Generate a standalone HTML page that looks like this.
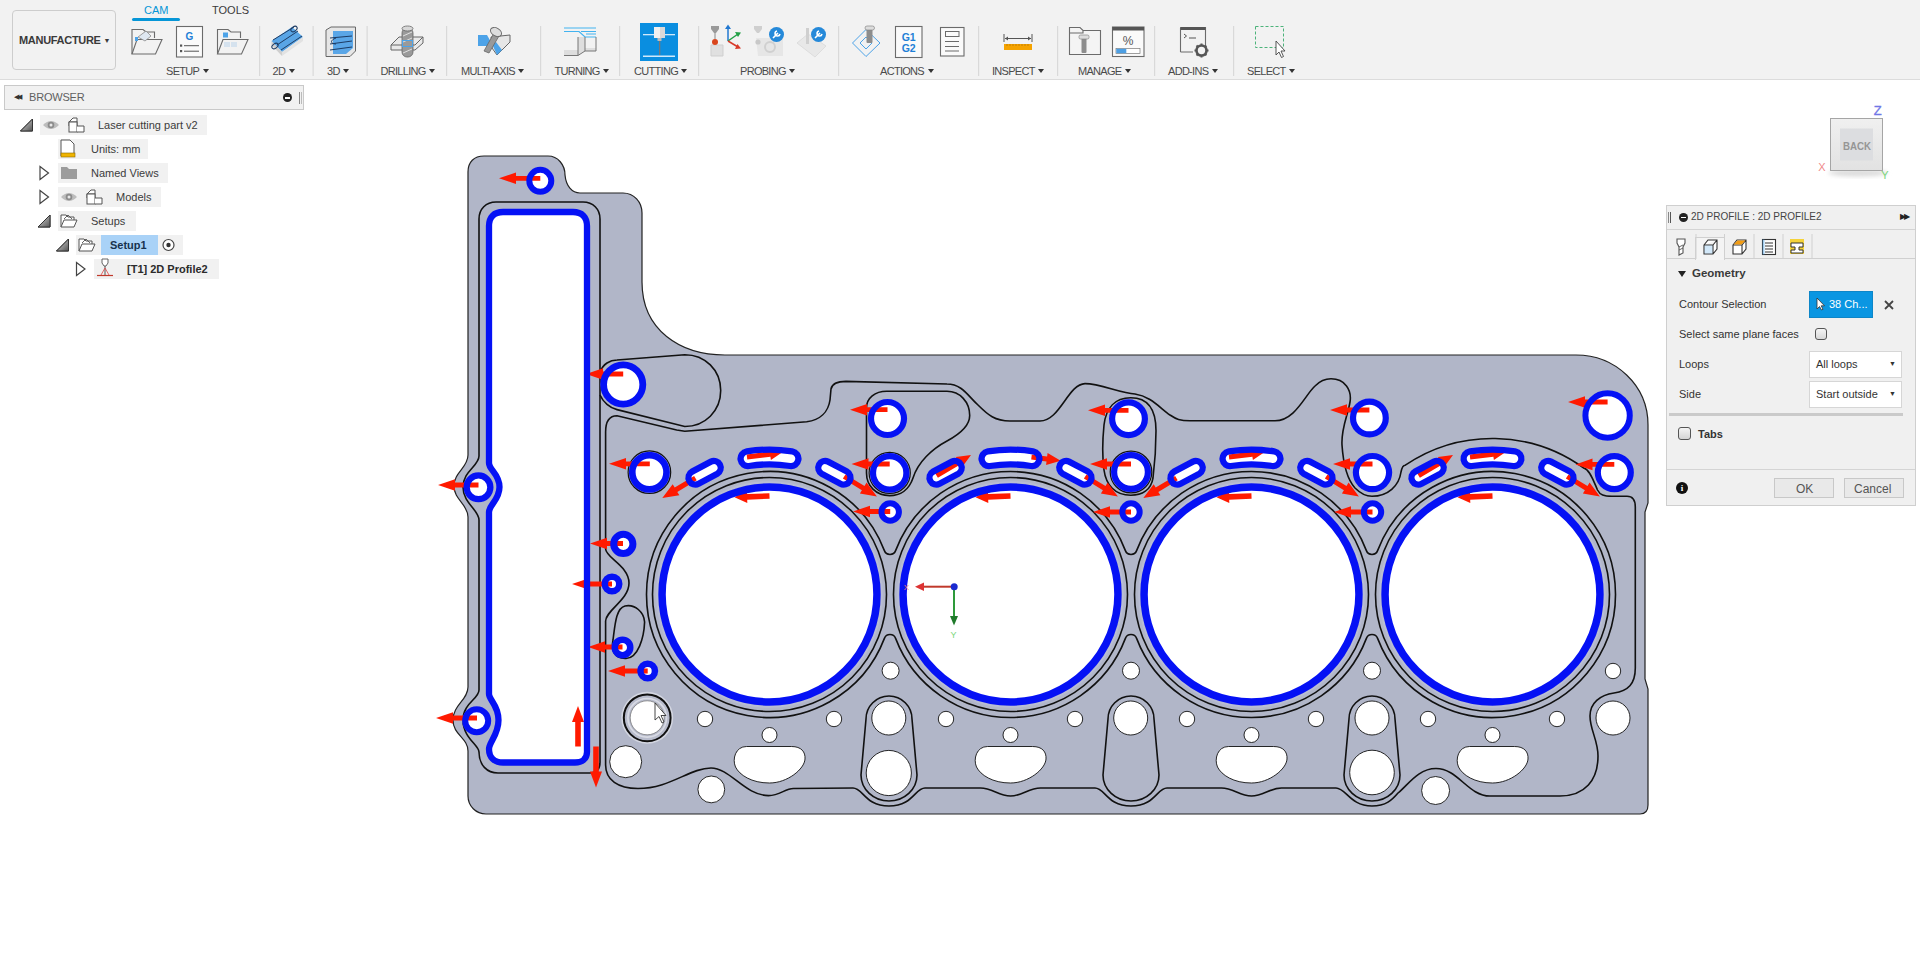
<!DOCTYPE html>
<html><head><meta charset="utf-8">
<style>
*{margin:0;padding:0;box-sizing:border-box}
html,body{width:1920px;height:953px;overflow:hidden;background:#fff;font-family:"Liberation Sans",sans-serif;position:relative}
.abs{position:absolute}
#tb{position:absolute;left:0;top:0;width:1920px;height:80px;background:#f2f2f2;border-bottom:1px solid #dcdcdc}
.lbl{position:absolute;top:65px;font-size:11px;color:#4a4a4a;white-space:nowrap;letter-spacing:-0.7px}
.lbl b{display:inline-block;width:0;height:0;border-left:3px solid transparent;border-right:3px solid transparent;border-top:4px solid #333;vertical-align:2px;margin-left:3.5px}
.sep{position:absolute;top:26px;width:1px;height:50px;background:#d6d6d6}
.ico{position:absolute}
#browser{position:absolute;left:4px;top:85px;width:300px;height:25px;background:#f1f1f1;border:1px solid #c9c9c9}
.row{position:absolute;height:20px;background:#f1f1f1}
.t{position:absolute;font-size:11px;color:#3c3c3c;white-space:nowrap}
#dlg{position:absolute;left:1666px;top:205px;width:250px;height:301px;background:#f0f0f0;border:1px solid #cfcfcf}
.dt{position:absolute;font-size:11px;color:#333;white-space:nowrap}
</style></head><body>
<div id="tb">
  <!-- MANUFACTURE -->
  <div class="abs" style="left:12px;top:10px;width:104px;height:60px;border:1px solid #cdcdcd;border-radius:4px;background:#f2f2f2"></div>
  <div class="abs" style="left:19px;top:34px;font-size:11px;font-weight:bold;color:#3a3a3a;letter-spacing:-0.3px">MANUFACTURE <span style="font-size:7px;vertical-align:1px">&#9660;</span></div>
  <div class="abs" style="left:144px;top:4px;font-size:11px;color:#0696d7">CAM</div>
  <div class="abs" style="left:132px;top:18px;width:48px;height:3px;background:#0696d7;border-radius:2px"></div>
  <div class="abs" style="left:212px;top:4px;font-size:11px;color:#3a3a3a">TOOLS</div>
  <svg class="abs" style="left:0;top:0" width="1920" height="80" viewBox="0 0 1920 80">
<rect x="259" y="26" width="1.2" height="50" fill="#d9d9d9"/>
<rect x="312.5" y="26" width="1.2" height="50" fill="#d9d9d9"/>
<rect x="366.5" y="26" width="1.2" height="50" fill="#d9d9d9"/>
<rect x="446" y="26" width="1.2" height="50" fill="#d9d9d9"/>
<rect x="540" y="26" width="1.2" height="50" fill="#d9d9d9"/>
<rect x="619" y="26" width="1.2" height="50" fill="#d9d9d9"/>
<rect x="698" y="26" width="1.2" height="50" fill="#d9d9d9"/>
<rect x="838" y="26" width="1.2" height="50" fill="#d9d9d9"/>
<rect x="978" y="26" width="1.2" height="50" fill="#d9d9d9"/>
<rect x="1057" y="26" width="1.2" height="50" fill="#d9d9d9"/>
<rect x="1154" y="26" width="1.2" height="50" fill="#d9d9d9"/>
<rect x="1233" y="26" width="1.2" height="50" fill="#d9d9d9"/>
<g fill="none" stroke="#6b6b6b" stroke-width="1.1"><path d="M132,54 L132,29.5 L143,29.5 L146,32 L154.5,32 L154.5,38"/><path d="M132,54 L137,39.5 L162,39.5 L155.5,54 Z" fill="#f2f2f2"/></g>
<path d="M138,37 L146,31 L151,36 L145,41 Z" fill="#dfe8f2" stroke="#8a8a8a" stroke-width="0.8"/>
<rect x="135" y="37" width="3" height="4" fill="#4da3e8"/>
<rect x="176.5" y="26.5" width="26" height="30.5" fill="#fafafa" stroke="#6b6b6b" stroke-width="1.1"/>
<text x="189.5" y="40" font-size="10" font-weight="bold" fill="#1f7fd6" text-anchor="middle" font-family="Liberation Sans">G</text>
<rect x="180" y="44.5" width="2.2" height="2.2" fill="#555"/><rect x="184" y="45.2" width="15" height="1" fill="#555"/>
<rect x="180" y="50" width="2.2" height="2.2" fill="#555"/><rect x="184" y="50.7" width="15" height="1" fill="#555"/>
<g fill="none" stroke="#6b6b6b" stroke-width="1.1"><path d="M217.5,54 L217.5,29.5 L228,29.5 L231,32 L240.5,32 L240.5,38"/><path d="M217.5,54 L223,39.5 L248,39.5 L241.5,54 Z" fill="#f2f2f2"/></g>
<rect x="223" y="32.5" width="5" height="5" fill="#4da3e8"/>
<rect x="224" y="42" width="6" height="5" fill="#d5e2ee"/><rect x="231" y="42" width="6" height="5" fill="#d5e2ee"/>
<path d="M271.5,41 L292,27 L303,37 L282,52 Z" fill="#59a5e6"/>
<path d="M271.5,41 L282,52 L282,56 L271.5,45 Z" fill="#cfcfcf"/>
<path d="M282,52 L303,37 L303,41 L282,56 Z" fill="#e2e2e2"/>
<g fill="none" stroke="#1d3b63" stroke-width="1"><path d="M273,40 L294,27"/><path d="M277,45 L298,31"/><path d="M281,50 L302,36"/><ellipse cx="294" cy="29" rx="3.5" ry="2.2" transform="rotate(-35 294 29)"/><ellipse cx="275" cy="46" rx="3.5" ry="2.2" transform="rotate(-35 275 46)"/></g>
<path d="M326,30 L331,27 L355.5,27 L355.5,51 L350,56.5 L326,56.5 Z" fill="#e6e6e6" stroke="#666" stroke-width="1"/>
<path d="M333,31 L353,31 L353,48 L346,54 L333,54 Z" fill="#5aa6e7"/>
<g fill="none" stroke="#1d3b63" stroke-width="1"><path d="M330,38 L352,36 M330,44 L352,41 M330,50 L352,47"/><path d="M336,38 C330,40 330,44 336,44"/></g>
<path d="M391,45 L399,37 L423,37 L423,43 L415,50 L391,50 Z" fill="#e9e9e9" stroke="#666" stroke-width="1"/>
<path d="M391,45 L415,45 L423,37" fill="none" stroke="#666" stroke-width="1"/>
<rect x="402" y="28" width="11" height="29" rx="5" fill="#9a9a9a" stroke="#666" stroke-width="0.8"/>
<ellipse cx="407.5" cy="28.5" rx="5.5" ry="2.5" fill="#d8d8d8" stroke="#666" stroke-width="0.8"/>
<g stroke="#e0e0e0" stroke-width="1"><path d="M403,36 L412,32 M403,42 L412,38 M403,53 L412,49"/></g>
<rect x="402.5" y="40.5" width="10" height="6" fill="none" stroke="#4da3e8" stroke-width="1"/>
<path d="M478,35 L487,35 L492,44 L491,46 L478,46 Z" fill="#4da3e8"/>
<path d="M491,37 L510,35 L510,42 L497,55 L492,48 Z" fill="#e6e6e6" stroke="#666" stroke-width="1"/>
<path d="M492,44 L497,55 L502,50 L496,42 Z" fill="#4da3e8"/>
<path d="M484,51 L494,33 L499,36 L489,53 Z" fill="#999" stroke="#666" stroke-width="0.8"/>
<ellipse cx="496" cy="32" rx="6" ry="4" transform="rotate(30 496 32)" fill="#ddd" stroke="#666" stroke-width="0.9"/>
<g fill="none" stroke="#43b3f0" stroke-width="1.2"><path d="M564,28 L596,28 M564,31.5 L579,31.5 L585,37 L596,37 M581,31.5 L596,31.5 M586,34 L596,34"/></g>
<path d="M564,50 L578,50 L578,37 L585,37 L585,48 L596,48 L596,51 L585,51 L578,55.5 L564,55.5 Z" fill="#dedede"/>
<path d="M578,55.5 L578,37 M585,37 L585,51 M596,37 L596,51 L585,51 L578,55.5 L564,55.5" fill="none" stroke="#777" stroke-width="1"/>
<rect x="640" y="23" width="38" height="38" fill="#0a8ee0"/>
<rect x="643" y="34" width="32" height="1.3" fill="#cfe9fb"/><rect x="643" y="55.5" width="32" height="1.5" fill="#cfe9fb"/>
<rect x="654" y="27" width="11" height="11" fill="#f0f0f0"/><rect x="660" y="27" width="5" height="11" fill="#d9d9d9"/>
<rect x="657.5" y="38" width="4" height="3" fill="#bbb"/><rect x="659" y="41" width="1.3" height="14" fill="#777"/>
<path d="M711,45 L723,45 L723,56 L711,56 Z" fill="#e0e0e0" stroke="#cfcfcf"/>
<path d="M711,26 L719,26 L719,29 L716,33 L714,33 L711,29 Z" fill="#9a9a9a"/><rect x="714.5" y="33" width="1" height="6" fill="#888"/>
<circle cx="715" cy="42" r="3" fill="#d9451c"/>
<path d="M728,41 L728,28" stroke="#2278d0" stroke-width="1.5"/><path d="M725,29 L728,24.5 L731,29 Z" fill="#2278d0"/>
<path d="M728,41 L738,34" stroke="#23a046" stroke-width="1.5"/><path d="M735,32 L741,32.5 L738,37 Z" fill="#23a046"/>
<path d="M728,41 L738,47" stroke="#d83a2a" stroke-width="1.5"/><path d="M735,49 L741,48.5 L737.5,44 Z" fill="#d83a2a"/>
<path d="M756,38 L783,38 L783,56 L758,56 Z" fill="#e6e6e6"/><circle cx="770" cy="47" r="5" fill="none" stroke="#d0d0d0" stroke-width="2"/>
<path d="M754,26 L762,26 L762,29 L759,33 L757,33 L754,29 Z" fill="#cfcfcf"/><circle cx="758" cy="42" r="2.6" fill="#c8c8c8"/>
<circle cx="776.5" cy="34.5" r="7.5" fill="#2589d9"/><path d="M773,38 L778,33 M777,31 A2.5,2.5 0 1 0 780,34" stroke="#fff" stroke-width="1.6" fill="none"/>
<path d="M797,43 L808,34 L826,46 L815,57 Z" fill="#e8e8e8" stroke="#ddd"/><rect x="806" y="28" width="3" height="16" fill="#cfcfcf"/>
<circle cx="818.5" cy="34.5" r="7.5" fill="#2589d9"/><path d="M815,38 L820,33 M819,31 A2.5,2.5 0 1 0 822,34" stroke="#fff" stroke-width="1.6" fill="none"/>
<path d="M866,29.5 L880,43 L866,56.5 L852.5,43 Z" fill="none" stroke="#4da3e8" stroke-width="1"/>
<path d="M866,37 L872,43 L866,49 L860,43 Z" fill="none" stroke="#4da3e8" stroke-width="1"/>
<rect x="866.5" y="29" width="6" height="14" rx="1" fill="#8d8d8d"/><rect x="865" y="26" width="9.5" height="4" rx="2" fill="#ddd" stroke="#888" stroke-width="0.7"/>
<rect x="895.5" y="26.5" width="26.5" height="31" fill="#fafafa" stroke="#6b6b6b" stroke-width="1.1"/>
<text x="908.7" y="40.5" font-size="10.5" font-weight="bold" fill="#1f7fd6" text-anchor="middle" font-family="Liberation Sans">G1</text>
<text x="908.7" y="52" font-size="10.5" font-weight="bold" fill="#1f7fd6" text-anchor="middle" font-family="Liberation Sans">G2</text>
<rect x="940.5" y="27.5" width="23.5" height="28.5" fill="#fafafa" stroke="#6b6b6b" stroke-width="1.1"/>
<rect x="945.5" y="31.5" width="13.5" height="5" fill="none" stroke="#6b6b6b" stroke-width="1"/>
<path d="M945,41.5 L959,41.5 M945,46.5 L959,46.5 M945,51 L959,51" stroke="#6b6b6b" stroke-width="1"/>
<rect x="1004" y="44" width="28" height="6" fill="#f5a300"/>
<g stroke="#a66a00" stroke-width="0.6"><path d="M1007,44 v2 M1010,44 v2 M1013,44 v2 M1016,44 v2 M1019,44 v2 M1022,44 v2 M1025,44 v2 M1028,44 v2"/></g>
<path d="M1004,34 v8 M1032,34 v8 M1005,38.5 L1031,38.5" stroke="#555" stroke-width="1"/>
<path d="M1005,38.5 L1008,36.5 L1008,40.5 Z M1031,38.5 L1028,36.5 L1028,40.5 Z" fill="#555"/>
<path d="M1069.5,54.5 L1069.5,27.5 L1080,27.5 L1083,30.5 L1100.5,30.5 L1100.5,54.5 Z M1069.5,33 L1083,33 L1083,30.5" fill="#f4f4f4" stroke="#6b6b6b" stroke-width="1.1"/>
<rect x="1081.5" y="37" width="5" height="16" rx="1" fill="#8d8d8d"/><rect x="1079" y="35" width="10" height="4" rx="1.5" fill="#ddd" stroke="#888" stroke-width="0.7"/>
<rect x="1112.5" y="27" width="31.5" height="29.5" fill="#fafafa" stroke="#6b6b6b" stroke-width="1.1"/>
<rect x="1112.5" y="27" width="31.5" height="3.5" fill="#555"/>
<text x="1128" y="45" font-size="12" fill="#555" text-anchor="middle" font-family="Liberation Sans">%</text>
<rect x="1116" y="48.5" width="24" height="5" fill="#fff" stroke="#777" stroke-width="0.7"/><rect x="1116.3" y="48.8" width="10" height="4.4" fill="#4d9fe3"/>
<path d="M1180.5,27.5 L1205.5,27.5 L1205.5,47 M1193,52 L1180.5,52 Z" fill="none" stroke="#6b6b6b" stroke-width="1.1"/>
<path d="M1180.5,27.5 L1180.5,52" stroke="#6b6b6b" stroke-width="1.1"/><rect x="1180.5" y="27" width="25" height="3" fill="#555"/>
<path d="M1184,34 L1186.5,36 L1184,38" fill="none" stroke="#555" stroke-width="1"/><path d="M1189,38 L1196,38" stroke="#555" stroke-width="1"/>
<circle cx="1201.5" cy="50.5" r="5" fill="none" stroke="#555" stroke-width="2.6"/>
<g stroke="#555" stroke-width="2"><path d="M1201.5,43.5 v2 M1201.5,55.5 v2 M1194.5,50.5 h2 M1206.5,50.5 h2 M1196.5,45.5 l1.4,1.4 M1205,54 l1.4,1.4 M1196.5,55.5 l1.4,-1.4 M1205,47 l1.4,-1.4"/></g>
<rect x="1255.5" y="26.5" width="28" height="21" fill="none" stroke="#4cb37a" stroke-width="1" stroke-dasharray="3,2"/>
<path d="M1276,41 L1276,55 L1279,52 L1281.5,57.5 L1283.5,56.5 L1281,51 L1285,51 Z" fill="#fff" stroke="#444" stroke-width="0.9"/>
</svg>
<div class="lbl" style="left:166px">SETUP<b></b></div>
<div class="lbl" style="left:272.5px">2D<b></b></div>
<div class="lbl" style="left:327px">3D<b></b></div>
<div class="lbl" style="left:380.5px">DRILLING<b></b></div>
<div class="lbl" style="left:461px">MULTI-AXIS<b></b></div>
<div class="lbl" style="left:554.5px">TURNING<b></b></div>
<div class="lbl" style="left:634px">CUTTING<b></b></div>
<div class="lbl" style="left:740px">PROBING<b></b></div>
<div class="lbl" style="left:880px">ACTIONS<b></b></div>
<div class="lbl" style="left:992px">INSPECT<b></b></div>
<div class="lbl" style="left:1078px">MANAGE<b></b></div>
<div class="lbl" style="left:1168px">ADD-INS<b></b></div>
<div class="lbl" style="left:1247px">SELECT<b></b></div>
</div>
<div id="browser">
  <div class="abs" style="left:9px;top:7px;font-size:7px;color:#333;letter-spacing:-2px">&#9664;&#9664;</div>
  <div class="abs" style="left:24px;top:5px;font-size:11px;color:#606060;letter-spacing:-0.2px">BROWSER</div>
  <div class="abs" style="left:278px;top:7px;width:9px;height:9px;border-radius:50%;background:#222"></div>
  <div class="abs" style="left:280px;top:11px;width:5px;height:1.5px;background:#fff"></div>
  <div class="abs" style="left:294px;top:6px;width:1px;height:12px;background:#888"></div>
  <div class="abs" style="left:296px;top:6px;width:1px;height:12px;background:#bbb"></div>
</div>
<div class="row" style="left:40px;top:115px;width:167px"></div>
<div class="row" style="left:58px;top:139px;width:90px"></div>
<div class="row" style="left:58px;top:163px;width:110px"></div>
<div class="row" style="left:58px;top:187px;width:103px"></div>
<div class="row" style="left:58px;top:211px;width:78px"></div>
<div class="row" style="left:76px;top:235px;width:107px"></div>
<div class="row" style="left:94px;top:259px;width:125px"></div>
<div class="abs" style="left:101px;top:235px;width:57px;height:20px;background:#a9d2f7"></div>
<svg class="abs" style="left:0;top:110px" width="310" height="180" viewBox="0 110 310 180">
<defs><linearGradient id="tg" x1="0" y1="0" x2="1" y2="1"><stop offset="0" stop-color="#ddd"/><stop offset="1" stop-color="#555"/></linearGradient></defs>
<path d="M32.5,119 L32.5,131 L20.5,131 Z" fill="#888" stroke="#444" stroke-width="1"/>
<path d="M32.5,119 L20.5,131 L32.5,131 Z" fill="url(#tg)" stroke="#333" stroke-width="1"/>
<path d="M40,166.5 L48.5,173 L40,179.5 Z" fill="#fff" stroke="#444" stroke-width="1.2"/>
<path d="M40,190.5 L48.5,197 L40,203.5 Z" fill="#fff" stroke="#444" stroke-width="1.2"/>
<path d="M50,215 L50,227 L38,227 Z" fill="#888" stroke="#444" stroke-width="1"/>
<path d="M50,215 L38,227 L50,227 Z" fill="url(#tg)" stroke="#333" stroke-width="1"/>
<path d="M68.5,239 L68.5,251 L56.5,251 Z" fill="#888" stroke="#444" stroke-width="1"/>
<path d="M68.5,239 L56.5,251 L68.5,251 Z" fill="url(#tg)" stroke="#333" stroke-width="1"/>
<path d="M76.5,262.5 L85.0,269 L76.5,275.5 Z" fill="#fff" stroke="#444" stroke-width="1.2"/>
<path d="M43,125 Q51,117 59,125 Q51,133 43,125 Z" fill="#bdbdbd"/>
<circle cx="51" cy="125" r="3.3" fill="#8c8c8c"/><circle cx="51" cy="125" r="1.5" fill="#e8e8e8"/>
<path d="M61,197 Q69,189 77,197 Q69,205 61,197 Z" fill="#bdbdbd"/>
<circle cx="69" cy="197" r="3.3" fill="#8c8c8c"/><circle cx="69" cy="197" r="1.5" fill="#e8e8e8"/>
<g fill="#fff" stroke="#555" stroke-width="1"><path d="M69,122 L73,118 L77,118 L77,126 L69,126 Z"/><path d="M69,122 L77,122"/><rect x="69" y="122" width="8" height="10"/><path d="M77,126 L84,126 L84,132 L77,132"/></g>
<g fill="#fff" stroke="#555" stroke-width="1"><path d="M87,194 L91,190 L95,190 L95,198 L87,198 Z"/><path d="M87,194 L95,194"/><rect x="87" y="194" width="8" height="10"/><path d="M95,198 L102,198 L102,204 L95,204"/></g>
<path d="M61,140 L70,140 L74,144 L74,156 L61,156 Z" fill="#fff" stroke="#555" stroke-width="1"/>
<rect x="61" y="153" width="14" height="4" fill="#f0b400" stroke="#8a6a00" stroke-width="0.6"/>
<path d="M61,167 L67,167 L69,169 L77,169 L77,179 L61,179 Z" fill="#9c9c9c"/>
<g fill="#fff" stroke="#555" stroke-width="1"><path d="M61,227 L61,215 L66,215 L68,217 L74,217 L74,220"/><path d="M61,227 L64,220 L77,220 L74,227 Z"/></g>
<path d="M64,219 L68,215 L72,219" fill="none" stroke="#555" stroke-width="0.9"/>
<g fill="#fff" stroke="#555" stroke-width="1"><path d="M79,251 L79,239 L84,239 L86,241 L92,241 L92,244"/><path d="M79,251 L82,244 L95,244 L92,251 Z"/></g>
<path d="M82,243 L86,239 L90,243" fill="none" stroke="#555" stroke-width="0.9"/>
<circle cx="168.5" cy="245" r="5.5" fill="#fff" stroke="#444" stroke-width="1.2"/><circle cx="168.5" cy="245" r="2.2" fill="#333"/>
<path d="M102,259 L108,259 L108,263 L106,266 L104,266 L102,263 Z" fill="#fff" stroke="#555" stroke-width="0.9"/>
<path d="M105,266 L105,275" stroke="#555" stroke-width="1"/><path d="M97,275.5 L113,275.5" stroke="#c0392b" stroke-width="1.2"/>
<path d="M105,268 L101,275 M105,268 L109,275" stroke="#d44" stroke-width="0.8"/>
</svg>
<div class="t" style="left:98px;top:119px;">Laser cutting part v2</div>
<div class="t" style="left:91px;top:143px;">Units: mm</div>
<div class="t" style="left:91px;top:167px;">Named Views</div>
<div class="t" style="left:116px;top:191px;">Models</div>
<div class="t" style="left:91px;top:215px;">Setups</div>
<div class="t" style="left:110px;top:239px;font-weight:bold;color:#17324f">Setup1</div>
<div class="t" style="left:127px;top:263px;font-weight:bold;color:#2b2b2b">[T1] 2D Profile2</div>
<svg class="abs" style="left:0;top:0" width="1920" height="953" viewBox="0 0 1920 953">
<path d="M468,172 C468,162 474,156 484,156 L548,156 C558,156 565,165 565,175 C566,186 572,193 580,193 L623,193 C634,193 642,202 642,213 L642,282 C642,330 680,355 725,355 L1576,355 C1615,355 1648,385 1648,425 L1648,503 L1645,512 L1645,679 L1648,689 L1648,805 Q1648,814 1640,814 L486,814 C476,814 468,806 468,796 L468,751 C468,738 453,735 453,720 C453,705 468,700 468,687 L468,517 C468,504 454,500 454,486 C454,472 468,468 468,455 Z" fill="#b1b6c8" stroke="#222" stroke-width="1.2"/>
<path d="M496,202 L583,202 C593,202 600,209 600,219 L600,762 Q600,773 590,773 L498,773 C487,773 479,765 479,752 C479,745 463,738 463,720 C463,703 479,699 479,690 L479,520 C479,510 463,503 463,487 C463,471 479,466 479,456 L479,219 C479,209 486,202 496,202 Z" fill="none" stroke="#111" stroke-width="1.6"/>
<path d="M600,372 C603,364 610,360 617,360 L684.8,354.7 C705,354.7 720.7,370 720.7,390.6 C720.7,411 705,426.5 684.8,426.5 L617,409.6 C610,408 603,402 600,395" fill="none" stroke="#111" stroke-width="1.6"/>
<path d="M605.6,432 C605.6,420 610,415.7 617,415.7 L676.7,430 L684.8,431.2 L806.7,421.8 C820,420 828.3,412 830,400 L831,389 C832,384 838,381.4 846,381.4 L947,384 C962,384 968,396 978,405 C988,415 995,421 1010,421 L1040,421 C1060,421 1068,384 1085,383.6 C1100,383.5 1120,393 1135,394 C1150,396 1160,408 1170,415 C1176,419 1180,420.8 1190,420.8 L1275,420.8 C1295,420.8 1305,395 1315,386 C1322,379 1327,378.8 1331,378.8 C1345,378.8 1352,390 1350,402 C1348,415 1341,428 1342,445 C1343,460 1346,478 1355,488 C1362,495 1368,496.3 1372,496.3 C1388,496.3 1399,486 1401,472 C1402,467 1403,465 1405.3,465.2 A156,156 0 0 1 1584.2,468.3 C1590,470 1594,482 1597.5,490 C1600,495 1604,496.3 1612,496.3 L1627,496.3 C1632,496.3 1635.3,500 1635.3,507 L1635.3,668 C1635.3,684 1628,691 1614,693 C1600,695 1590,703 1590,716 C1590,730 1598,740 1598,756 C1598,780 1585,796 1560,796 L1490,796 C1468,796 1458,768.5 1436,768.5 C1418,768.5 1408,785 1398,793 C1392,800 1386,806 1372,806 C1350,806 1346,788 1336,788 L1281.5,788 C1269.5,788 1263.5,796 1251.5,796 C1239.5,796 1233.5,788 1221.5,788 L1170,788 L1167.0,788 C1157.0,788 1155.0,806 1131.0,806 C1107.0,806 1105.0,788 1095.0,788 L1040.5,788 C1028.5,788 1022.5,796 1010.5,796 C998.5,796 992.5,788 980.5,788 L930,788 L925.0,788 C915.0,788 913.0,806 889.0,806 C865.0,806 863.0,788 853.0,788 L793.4,788.5 C785,788.5 780,795.6 768.5,795.6 C745,795.6 730,768 711,768 C690,768 670,788.5 638,788.5 C618,788.5 605.6,780 605.6,765 L605.6,621 C606,610 629,600 629,583 C629,566 606,558 605.6,549 L605.6,432 Z" fill="none" stroke="#111" stroke-width="1.6"/>
<path d="M866.5,473 L866.5,408 C866.5,398 875,391.3 886.7,391.3 L947,391.3 C960,391.3 969.7,402 969.7,415.5 C969.7,425 960,434 947,441 C932,449 918,462 913,478 C909,490 900,495.6 889.7,495.6 C876,495.6 866.5,486 866.5,473 Z" fill="none" stroke="#111" stroke-width="1.6"/>
<path d="M1130.8,397.8 C1148,397.8 1156,410 1156,430.8 C1156,450 1154,470 1153,478 C1151,490 1142,495.3 1130.8,495.3 C1115,495.3 1106,485 1104,470 C1102,455 1102.5,440 1104,425 C1106,408 1115,397.8 1130.8,397.8 Z" fill="none" stroke="#111" stroke-width="1.6"/>
<path d="M625,606 C635,604 644,612 644.6,622 C644,638 638,658 626,658.5 C614,659 611,650 613,640 C615,625 616,608 625,606 Z" fill="none" stroke="#111" stroke-width="1.6"/>
<path d="M866.0,719 A23,23 0 0 1 912.0,719 L917.0,775 A28,26 0 0 1 861.0,775 Z" fill="none" stroke="#111" stroke-width="1.6"/>
<path d="M1108.0,719 A23,23 0 0 1 1154.0,719 L1159.0,775 A28,26 0 0 1 1103.0,775 Z" fill="none" stroke="#111" stroke-width="1.6"/>
<path d="M1349.0,719 A23,23 0 0 1 1395.0,719 L1400.0,775 A28,26 0 0 1 1344.0,775 Z" fill="none" stroke="#111" stroke-width="1.6"/>
<circle cx="769.5" cy="594.5" r="117" fill="none" stroke="#111" stroke-width="1.6"/>
<circle cx="1010.5" cy="594.5" r="117" fill="none" stroke="#111" stroke-width="1.6"/>
<circle cx="1251.5" cy="594.5" r="117" fill="none" stroke="#111" stroke-width="1.6"/>
<circle cx="1492.5" cy="594.5" r="117" fill="none" stroke="#111" stroke-width="1.6"/>
<path d="M646.5,594.5 A123,123 0 0 1 884.4,550.6 A6,6 0 0 0 895.6,550.6 A123,123 0 0 1 1125.4,550.6 A6,6 0 0 0 1136.6,550.6 A123,123 0 0 1 1366.4,550.6 A6,6 0 0 0 1377.6,550.6 A123,123 0 0 1 1615.5,594.5 A123,123 0 0 1 1377.6,638.4 A6,6 0 0 0 1366.4,638.4 A123,123 0 0 1 1136.6,638.4 A6,6 0 0 0 1125.4,638.4 A123,123 0 0 1 895.6,638.4 A6,6 0 0 0 884.4,638.4 A123,123 0 0 1 646.5,594.5 Z" fill="none" stroke="#111" stroke-width="1.6"/>
<circle cx="769.5" cy="594.5" r="112.3" fill="none" stroke="#b9bdd4" stroke-width="2"/>
<circle cx="1010.5" cy="594.5" r="112.3" fill="none" stroke="#b9bdd4" stroke-width="2"/>
<circle cx="1251.5" cy="594.5" r="112.3" fill="none" stroke="#b9bdd4" stroke-width="2"/>
<circle cx="1492.5" cy="594.5" r="112.3" fill="none" stroke="#b9bdd4" stroke-width="2"/>
<circle cx="705.0" cy="719" r="7.7" fill="#fff" stroke="#111" stroke-width="0.9"/>
<circle cx="769.5" cy="735" r="7.5" fill="#fff" stroke="#111" stroke-width="0.9"/>
<circle cx="834.0" cy="719" r="7.7" fill="#fff" stroke="#111" stroke-width="0.9"/>
<path d="M746.5,746.5 L791.5,746.5 C801.5,746.5 805.5,752 805.0,759 C804.5,769 787.5,783 769.5,783 C751.5,783 739.5,775 735.5,767 C732.0,759 735.5,746.5 746.5,746.5 Z" fill="#fff" stroke="#111" stroke-width="0.9"/>
<circle cx="946.0" cy="719" r="7.7" fill="#fff" stroke="#111" stroke-width="0.9"/>
<circle cx="1010.5" cy="735" r="7.5" fill="#fff" stroke="#111" stroke-width="0.9"/>
<circle cx="1075.0" cy="719" r="7.7" fill="#fff" stroke="#111" stroke-width="0.9"/>
<path d="M987.5,746.5 L1032.5,746.5 C1042.5,746.5 1046.5,752 1046.0,759 C1045.5,769 1028.5,783 1010.5,783 C992.5,783 980.5,775 976.5,767 C973.0,759 976.5,746.5 987.5,746.5 Z" fill="#fff" stroke="#111" stroke-width="0.9"/>
<circle cx="1187.0" cy="719" r="7.7" fill="#fff" stroke="#111" stroke-width="0.9"/>
<circle cx="1251.5" cy="735" r="7.5" fill="#fff" stroke="#111" stroke-width="0.9"/>
<circle cx="1316.0" cy="719" r="7.7" fill="#fff" stroke="#111" stroke-width="0.9"/>
<path d="M1228.5,746.5 L1273.5,746.5 C1283.5,746.5 1287.5,752 1287.0,759 C1286.5,769 1269.5,783 1251.5,783 C1233.5,783 1221.5,775 1217.5,767 C1214.0,759 1217.5,746.5 1228.5,746.5 Z" fill="#fff" stroke="#111" stroke-width="0.9"/>
<circle cx="1428.0" cy="719" r="7.7" fill="#fff" stroke="#111" stroke-width="0.9"/>
<circle cx="1492.5" cy="735" r="7.5" fill="#fff" stroke="#111" stroke-width="0.9"/>
<circle cx="1557.0" cy="719" r="7.7" fill="#fff" stroke="#111" stroke-width="0.9"/>
<path d="M1469.5,746.5 L1514.5,746.5 C1524.5,746.5 1528.5,752 1528.0,759 C1527.5,769 1510.5,783 1492.5,783 C1474.5,783 1462.5,775 1458.5,767 C1455.0,759 1458.5,746.5 1469.5,746.5 Z" fill="#fff" stroke="#111" stroke-width="0.9"/>
<circle cx="890.6" cy="670.7" r="8.5" fill="#fff" stroke="#111" stroke-width="0.9"/>
<circle cx="1131" cy="670.7" r="8.5" fill="#fff" stroke="#111" stroke-width="0.9"/>
<circle cx="1372" cy="670.7" r="8.5" fill="#fff" stroke="#111" stroke-width="0.9"/>
<circle cx="888.8" cy="718" r="17" fill="#fff" stroke="#111" stroke-width="0.9"/>
<circle cx="888.8" cy="773" r="22.6" fill="#fff" stroke="#111" stroke-width="0.9"/>
<circle cx="1130.7" cy="718" r="17" fill="#fff" stroke="#111" stroke-width="0.9"/>
<circle cx="1372" cy="718" r="17" fill="#fff" stroke="#111" stroke-width="0.9"/>
<circle cx="1372" cy="772.5" r="22.3" fill="#fff" stroke="#111" stroke-width="0.9"/>
<circle cx="711.3" cy="789.4" r="13.4" fill="#fff" stroke="#111" stroke-width="0.9"/>
<circle cx="1435.6" cy="790.5" r="14" fill="#fff" stroke="#111" stroke-width="0.9"/>
<circle cx="1613" cy="671" r="7.7" fill="#fff" stroke="#111" stroke-width="0.9"/>
<circle cx="1613" cy="718" r="17" fill="#fff" stroke="#111" stroke-width="0.9"/>
<circle cx="625.7" cy="761.7" r="16" fill="#fff" stroke="#111" stroke-width="0.9"/>
<circle cx="647.2" cy="717.8" r="26" fill="#d3d6e1"/>
<circle cx="647.2" cy="717.8" r="23.4" fill="#b8bccc" stroke="#111" stroke-width="2"/>
<circle cx="647.2" cy="717.8" r="19.3" fill="none" stroke="#d9dbe4" stroke-width="1.6"/>
<circle cx="647.2" cy="717.8" r="17" fill="#fff" stroke="#555" stroke-width="0.6"/>
<circle cx="649.4" cy="472.2" r="21.3" fill="none" stroke="#111" stroke-width="1.2"/>
<circle cx="889.7" cy="472.9" r="20.6" fill="none" stroke="#111" stroke-width="1.2"/>
<circle cx="1131" cy="472" r="20.8" fill="none" stroke="#111" stroke-width="1.2"/>
<circle cx="769.5" cy="594.5" r="110.70" fill="#fff"/>
<circle cx="1010.5" cy="594.5" r="110.70" fill="#fff"/>
<circle cx="1251.5" cy="594.5" r="110.70" fill="#fff"/>
<circle cx="1492.5" cy="594.5" r="110.70" fill="#fff"/>
<path d="M503,212 L573,212 C582,212 587,217 587,226 L587,752 C587,759 582,762.5 575,762.5 L503,762.5 C494,762.5 489,757 489,749 C489,742 498.5,735 498.5,720 C498.5,705 489,700 489,694 L489,512 C489,505 499.5,500 499.5,487 C499.5,474 489,470 489,463 L489,226 C489,217 494,212 503,212 Z" fill="#fff" stroke="#fff" stroke-width="5"/>
<circle cx="540.3" cy="180.8" r="13.50" fill="#fff"/>
<circle cx="478.5" cy="487.3" r="14.50" fill="#fff"/>
<circle cx="476.7" cy="720.7" r="14.00" fill="#fff"/>
<circle cx="623.2" cy="384.5" r="22.50" fill="#fff"/>
<circle cx="649.4" cy="472.2" r="20.00" fill="#fff"/>
<circle cx="887.5" cy="418.5" r="19.10" fill="#fff"/>
<circle cx="889.7" cy="472.9" r="19.30" fill="#fff"/>
<circle cx="890.2" cy="512" r="11.25" fill="#fff"/>
<circle cx="1128.5" cy="418.7" r="19.00" fill="#fff"/>
<circle cx="1131" cy="472" r="19.50" fill="#fff"/>
<circle cx="1131" cy="512" r="11.20" fill="#fff"/>
<circle cx="1369.4" cy="418" r="19.00" fill="#fff"/>
<circle cx="1372.5" cy="472.6" r="19.20" fill="#fff"/>
<circle cx="1372.5" cy="512" r="11.20" fill="#fff"/>
<circle cx="1607.6" cy="415.5" r="24.70" fill="#fff"/>
<circle cx="1614.3" cy="472.6" r="19.10" fill="#fff"/>
<circle cx="623.3" cy="543.9" r="12.60" fill="#fff"/>
<circle cx="612" cy="584" r="10.00" fill="#fff"/>
<circle cx="622.5" cy="647.4" r="10.50" fill="#fff"/>
<circle cx="647.7" cy="671" r="10.00" fill="#fff"/>
<path d="M699.8,486.0 L718.5,476.1 A9.50,9.50 0 0 0 709.6,459.3 L690.9,469.2 A9.50,9.50 0 0 0 699.8,486.0 Z" fill="#fff"/>
<path d="M820.5,476.1 L839.2,486.0 A9.50,9.50 0 0 0 848.1,469.2 L829.4,459.3 A9.50,9.50 0 0 0 820.5,476.1 Z" fill="#fff"/>
<path d="M746.4,448.8 A147.50,147.50 0 0 1 792.6,448.8 A10.00,10.00 0 0 1 789.4,468.6 A127.50,127.50 0 0 0 749.6,468.6 A10.00,10.00 0 0 1 746.4,448.8 Z" fill="#fff"/>
<path d="M940.8,486.0 L959.5,476.1 A9.50,9.50 0 0 0 950.6,459.3 L931.9,469.2 A9.50,9.50 0 0 0 940.8,486.0 Z" fill="#fff"/>
<path d="M1061.5,476.1 L1080.2,486.0 A9.50,9.50 0 0 0 1089.1,469.2 L1070.4,459.3 A9.50,9.50 0 0 0 1061.5,476.1 Z" fill="#fff"/>
<path d="M987.4,448.8 A147.50,147.50 0 0 1 1033.6,448.8 A10.00,10.00 0 0 1 1030.4,468.6 A127.50,127.50 0 0 0 990.6,468.6 A10.00,10.00 0 0 1 987.4,448.8 Z" fill="#fff"/>
<path d="M1181.8,486.0 L1200.5,476.1 A9.50,9.50 0 0 0 1191.6,459.3 L1172.9,469.2 A9.50,9.50 0 0 0 1181.8,486.0 Z" fill="#fff"/>
<path d="M1302.5,476.1 L1321.2,486.0 A9.50,9.50 0 0 0 1330.1,469.2 L1311.4,459.3 A9.50,9.50 0 0 0 1302.5,476.1 Z" fill="#fff"/>
<path d="M1228.4,448.8 A147.50,147.50 0 0 1 1274.6,448.8 A10.00,10.00 0 0 1 1271.4,468.6 A127.50,127.50 0 0 0 1231.6,468.6 A10.00,10.00 0 0 1 1228.4,448.8 Z" fill="#fff"/>
<path d="M1422.8,486.0 L1441.5,476.1 A9.50,9.50 0 0 0 1432.6,459.3 L1413.9,469.2 A9.50,9.50 0 0 0 1422.8,486.0 Z" fill="#fff"/>
<path d="M1543.5,476.1 L1562.2,486.0 A9.50,9.50 0 0 0 1571.1,469.2 L1552.4,459.3 A9.50,9.50 0 0 0 1543.5,476.1 Z" fill="#fff"/>
<path d="M1469.4,448.8 A147.50,147.50 0 0 1 1515.6,448.8 A10.00,10.00 0 0 1 1512.4,468.6 A127.50,127.50 0 0 0 1472.6,468.6 A10.00,10.00 0 0 1 1469.4,448.8 Z" fill="#fff"/>
<polygon fill="#ff1a00" points="540.3,175.9 516.0,175.9 516.0,172.5 499.0,178.3 516.0,184.1 516.0,180.7 540.3,180.7"/>
<polygon fill="#ff1a00" points="478.5,482.6 455.0,482.6 455.0,479.2 438.0,485.0 455.0,490.8 455.0,487.4 478.5,487.4"/>
<polygon fill="#ff1a00" points="477.0,715.6 453.0,715.6 453.0,712.2 436.0,718.0 453.0,723.8 453.0,720.4 477.0,720.4"/>
<polygon fill="#ff1a00" points="580.8,746.5 580.8,722.0 584.0,722.0 578.0,706.0 572.0,722.0 575.2,722.0 575.2,746.5"/>
<polygon fill="#ff1a00" points="593.2,746.5 593.2,771.5 590.0,771.5 596.0,787.5 602.0,771.5 598.8,771.5 598.8,746.5"/>
<polygon fill="#ff1a00" points="623.2,371.6 603.0,371.6 603.0,368.2 586.0,374.0 603.0,379.8 603.0,376.4 623.2,376.4"/>
<polygon fill="#ff1a00" points="649.8,461.4 626.0,461.4 626.0,458.0 609.0,463.8 626.0,469.6 626.0,466.2 649.8,466.2"/>
<polygon fill="#ff1a00" points="887.5,407.3 867.0,407.3 867.0,403.9 850.0,409.7 867.0,415.5 867.0,412.1 887.5,412.1"/>
<polygon fill="#ff1a00" points="889.7,461.6 868.5,461.6 868.5,458.2 851.5,464.0 868.5,469.8 868.5,466.4 889.7,466.4"/>
<polygon fill="#ff1a00" points="890.2,509.1 870.0,509.1 870.0,505.7 853.0,511.5 870.0,517.3 870.0,513.9 890.2,513.9"/>
<polygon fill="#ff1a00" points="1128.5,407.9 1105.0,407.9 1105.0,404.5 1088.0,410.3 1105.0,416.1 1105.0,412.7 1128.5,412.7"/>
<polygon fill="#ff1a00" points="1131.0,461.6 1107.0,461.6 1107.0,458.2 1090.0,464.0 1107.0,469.8 1107.0,466.4 1131.0,466.4"/>
<polygon fill="#ff1a00" points="1131.0,509.6 1110.0,509.6 1110.0,506.2 1093.0,512.0 1110.0,517.8 1110.0,514.4 1131.0,514.4"/>
<polygon fill="#ff1a00" points="1369.4,407.6 1347.0,407.6 1347.0,404.2 1330.0,410.0 1347.0,415.8 1347.0,412.4 1369.4,412.4"/>
<polygon fill="#ff1a00" points="1372.5,461.6 1350.0,461.6 1350.0,458.2 1333.0,464.0 1350.0,469.8 1350.0,466.4 1372.5,466.4"/>
<polygon fill="#ff1a00" points="1372.5,509.6 1351.0,509.6 1351.0,506.2 1334.0,512.0 1351.0,517.8 1351.0,514.4 1372.5,514.4"/>
<polygon fill="#ff1a00" points="1607.6,399.6 1585.0,399.6 1585.0,396.2 1568.0,402.0 1585.0,407.8 1585.0,404.4 1607.6,404.4"/>
<polygon fill="#ff1a00" points="1614.3,462.0 1592.5,462.0 1592.5,458.6 1575.5,464.4 1592.5,470.2 1592.5,466.8 1614.3,466.8"/>
<polygon fill="#ff1a00" points="623.0,541.1 607.0,541.1 607.0,537.7 590.0,543.5 607.0,549.3 607.0,545.9 623.0,545.9"/>
<polygon fill="#ff1a00" points="612.0,581.6 589.0,581.6 589.0,578.2 572.0,584.0 589.0,589.8 589.0,586.4 612.0,586.4"/>
<polygon fill="#ff1a00" points="622.5,644.6 605.0,644.6 605.0,641.2 588.0,647.0 605.0,652.8 605.0,649.4 622.5,649.4"/>
<polygon fill="#ff1a00" points="647.7,668.6 625.0,668.6 625.0,665.2 608.0,671.0 625.0,676.8 625.0,673.4 647.7,673.4"/>
<polygon fill="#ff1a00" points="769.4,493.2 747.0,494.0 746.9,490.5 734.5,497.3 747.3,503.1 747.2,499.7 769.6,498.8"/>
<polygon fill="#ff1a00" points="1010.4,493.2 988.0,494.0 987.9,490.5 975.5,497.3 988.3,503.1 988.2,499.7 1010.6,498.8"/>
<polygon fill="#ff1a00" points="1251.4,493.2 1229.0,494.0 1228.9,490.5 1216.5,497.3 1229.3,503.1 1229.2,499.7 1251.6,498.8"/>
<polygon fill="#ff1a00" points="1492.4,493.2 1470.0,494.0 1469.9,490.5 1457.5,497.3 1470.3,503.1 1470.2,499.7 1492.6,498.8"/>
<polygon fill="#ff1a00" points="747.3,459.6 770.4,456.7 770.9,460.0 782.0,452.5 769.3,448.1 769.8,451.4 746.7,454.4"/>
<polygon fill="#ff1a00" points="1229.3,459.6 1252.4,456.7 1252.9,460.0 1264.0,452.5 1251.3,448.1 1251.8,451.4 1228.7,454.4"/>
<polygon fill="#ff1a00" points="1470.3,459.6 1493.4,456.7 1493.9,460.0 1505.0,452.5 1492.3,448.1 1492.8,451.4 1469.7,454.4"/>
<polygon fill="#ff1a00" points="694.1,476.0 674.7,487.6 672.7,484.2 662.3,498.0 679.4,495.3 677.3,491.9 696.7,480.2"/>
<polygon fill="#ff1a00" points="842.9,478.6 861.9,490.2 859.9,493.6 876.9,496.4 866.6,482.5 864.5,485.9 845.5,474.4"/>
<polygon fill="#ff1a00" points="937.9,477.8 960.3,464.4 962.0,467.3 971.0,455.0 955.9,457.0 957.6,459.9 935.1,473.2"/>
<polygon fill="#ff1a00" points="1031.2,459.5 1046.5,461.4 1046.1,464.9 1060.7,460.7 1047.6,453.0 1047.1,456.5 1031.8,454.5"/>
<polygon fill="#ff1a00" points="1083.9,478.6 1102.9,490.2 1100.9,493.6 1117.9,496.4 1107.6,482.5 1105.5,485.9 1086.5,474.4"/>
<polygon fill="#ff1a00" points="1175.1,476.0 1155.7,487.6 1153.7,484.2 1143.3,498.0 1160.4,495.3 1158.3,491.9 1177.7,480.2"/>
<polygon fill="#ff1a00" points="1324.9,478.6 1343.9,490.2 1341.9,493.6 1358.9,496.4 1348.6,482.5 1346.5,485.9 1327.5,474.4"/>
<polygon fill="#ff1a00" points="1419.9,477.8 1442.3,464.4 1444.0,467.3 1453.0,455.0 1437.9,457.0 1439.6,459.9 1417.1,473.2"/>
<polygon fill="#ff1a00" points="1565.9,478.6 1584.9,490.2 1582.9,493.6 1599.9,496.4 1589.6,482.5 1587.5,485.9 1568.5,474.4"/>
<circle cx="769.5" cy="594.5" r="107.45" fill="none" stroke="#0511f5" stroke-width="7.5"/>
<circle cx="1010.5" cy="594.5" r="107.45" fill="none" stroke="#0511f5" stroke-width="7.5"/>
<circle cx="1251.5" cy="594.5" r="107.45" fill="none" stroke="#0511f5" stroke-width="7.5"/>
<circle cx="1492.5" cy="594.5" r="107.45" fill="none" stroke="#0511f5" stroke-width="7.5"/>
<path d="M503,212 L573,212 C582,212 587,217 587,226 L587,752 C587,759 582,762.5 575,762.5 L503,762.5 C494,762.5 489,757 489,749 C489,742 498.5,735 498.5,720 C498.5,705 489,700 489,694 L489,512 C489,505 499.5,500 499.5,487 C499.5,474 489,470 489,463 L489,226 C489,217 494,212 503,212 Z" fill="none" stroke="#0511f5" stroke-width="6.3"/>
<circle cx="540.3" cy="180.8" r="11.00" fill="none" stroke="#0511f5" stroke-width="6"/>
<circle cx="478.5" cy="487.3" r="11.85" fill="none" stroke="#0511f5" stroke-width="6.3"/>
<circle cx="476.7" cy="720.7" r="11.50" fill="none" stroke="#0511f5" stroke-width="6"/>
<circle cx="623.2" cy="384.5" r="19.60" fill="none" stroke="#0511f5" stroke-width="6.8"/>
<circle cx="649.4" cy="472.2" r="17.15" fill="none" stroke="#0511f5" stroke-width="6.7"/>
<circle cx="887.5" cy="418.5" r="16.50" fill="none" stroke="#0511f5" stroke-width="6.2"/>
<circle cx="889.7" cy="472.9" r="16.70" fill="none" stroke="#0511f5" stroke-width="6.2"/>
<circle cx="890.2" cy="512" r="8.75" fill="none" stroke="#0511f5" stroke-width="6"/>
<circle cx="1128.5" cy="418.7" r="16.40" fill="none" stroke="#0511f5" stroke-width="6.2"/>
<circle cx="1131" cy="472" r="16.90" fill="none" stroke="#0511f5" stroke-width="6.2"/>
<circle cx="1131" cy="512" r="8.70" fill="none" stroke="#0511f5" stroke-width="6"/>
<circle cx="1369.4" cy="418" r="16.40" fill="none" stroke="#0511f5" stroke-width="6.2"/>
<circle cx="1372.5" cy="472.6" r="16.60" fill="none" stroke="#0511f5" stroke-width="6.2"/>
<circle cx="1372.5" cy="512" r="8.70" fill="none" stroke="#0511f5" stroke-width="6"/>
<circle cx="1607.6" cy="415.5" r="22.20" fill="none" stroke="#0511f5" stroke-width="6"/>
<circle cx="1614.3" cy="472.6" r="16.50" fill="none" stroke="#0511f5" stroke-width="6.2"/>
<circle cx="623.3" cy="543.9" r="9.60" fill="none" stroke="#0511f5" stroke-width="7"/>
<circle cx="612" cy="584" r="7.25" fill="none" stroke="#0511f5" stroke-width="6.5"/>
<circle cx="622.5" cy="647.4" r="7.75" fill="none" stroke="#0511f5" stroke-width="6.5"/>
<circle cx="647.7" cy="671" r="7.25" fill="none" stroke="#0511f5" stroke-width="6.5"/>
<path d="M698.6,483.7 L717.3,473.7 A6.85,6.85 0 0 0 710.9,461.6 L692.1,471.6 A6.85,6.85 0 0 0 698.6,483.7 Z" fill="none" stroke="#0511f5" stroke-width="6.3"/>
<path d="M821.7,473.7 L840.4,483.7 A6.85,6.85 0 0 0 846.9,471.6 L828.1,461.6 A6.85,6.85 0 0 0 821.7,473.7 Z" fill="none" stroke="#0511f5" stroke-width="6.3"/>
<path d="M746.8,451.4 A144.85,144.85 0 0 1 792.2,451.4 A7.35,7.35 0 0 1 789.9,466.0 A130.15,130.15 0 0 0 749.1,466.0 A7.35,7.35 0 0 1 746.8,451.4 Z" fill="none" stroke="#0511f5" stroke-width="6.3"/>
<path d="M939.6,483.7 L958.3,473.7 A6.85,6.85 0 0 0 951.9,461.6 L933.1,471.6 A6.85,6.85 0 0 0 939.6,483.7 Z" fill="none" stroke="#0511f5" stroke-width="6.3"/>
<path d="M1062.7,473.7 L1081.4,483.7 A6.85,6.85 0 0 0 1087.9,471.6 L1069.1,461.6 A6.85,6.85 0 0 0 1062.7,473.7 Z" fill="none" stroke="#0511f5" stroke-width="6.3"/>
<path d="M987.8,451.4 A144.85,144.85 0 0 1 1033.2,451.4 A7.35,7.35 0 0 1 1030.9,466.0 A130.15,130.15 0 0 0 990.1,466.0 A7.35,7.35 0 0 1 987.8,451.4 Z" fill="none" stroke="#0511f5" stroke-width="6.3"/>
<path d="M1180.6,483.7 L1199.3,473.7 A6.85,6.85 0 0 0 1192.9,461.6 L1174.1,471.6 A6.85,6.85 0 0 0 1180.6,483.7 Z" fill="none" stroke="#0511f5" stroke-width="6.3"/>
<path d="M1303.7,473.7 L1322.4,483.7 A6.85,6.85 0 0 0 1328.9,471.6 L1310.1,461.6 A6.85,6.85 0 0 0 1303.7,473.7 Z" fill="none" stroke="#0511f5" stroke-width="6.3"/>
<path d="M1228.8,451.4 A144.85,144.85 0 0 1 1274.2,451.4 A7.35,7.35 0 0 1 1271.9,466.0 A130.15,130.15 0 0 0 1231.1,466.0 A7.35,7.35 0 0 1 1228.8,451.4 Z" fill="none" stroke="#0511f5" stroke-width="6.3"/>
<path d="M1421.6,483.7 L1440.3,473.7 A6.85,6.85 0 0 0 1433.9,461.6 L1415.1,471.6 A6.85,6.85 0 0 0 1421.6,483.7 Z" fill="none" stroke="#0511f5" stroke-width="6.3"/>
<path d="M1544.7,473.7 L1563.4,483.7 A6.85,6.85 0 0 0 1569.9,471.6 L1551.1,461.6 A6.85,6.85 0 0 0 1544.7,473.7 Z" fill="none" stroke="#0511f5" stroke-width="6.3"/>
<path d="M1469.8,451.4 A144.85,144.85 0 0 1 1515.2,451.4 A7.35,7.35 0 0 1 1512.9,466.0 A130.15,130.15 0 0 0 1472.1,466.0 A7.35,7.35 0 0 1 1469.8,451.4 Z" fill="none" stroke="#0511f5" stroke-width="6.3"/>
<line x1="954" y1="586.7" x2="922" y2="586.7" stroke="#c0392b" stroke-width="2"/>
<polygon points="915,586.7 924,582.5 924,591" fill="#d33"/>
<line x1="954" y1="587" x2="954" y2="617" stroke="#2e9a3a" stroke-width="2"/>
<polygon points="954,625.5 950,616 958,616" fill="#1f7a2a"/>
<circle cx="954.2" cy="586.7" r="3.5" fill="#1a2ad0"/>
<text x="906.5" y="590" font-size="8" fill="#f08080" text-anchor="middle" font-family="Liberation Sans">X</text>
<text x="953.5" y="638" font-size="9" fill="#7cd67c" text-anchor="middle" font-family="Liberation Sans">Y</text>
<path d="M655,703 L655,720 L659,716.5 L662,723 L664,722 L661,715.5 L666,715.5 Z" fill="#fff" stroke="#333" stroke-width="0.9"/>
</svg>
<svg class="abs" style="left:1800px;top:95px" width="110" height="95" viewBox="1800 95 110 95">
<defs><linearGradient id="vcg" x1="0" y1="0" x2="0" y2="1"><stop offset="0" stop-color="#f0f0f0"/><stop offset="1" stop-color="#e2e2e2"/></linearGradient>
<filter id="vcs" x="-30%" y="-30%" width="160%" height="160%"><feGaussianBlur stdDeviation="2"/></filter></defs>
<ellipse cx="1858" cy="173" rx="30" ry="3.5" fill="#dcdcdc" filter="url(#vcs)"/>
<rect x="1830.5" y="118.5" width="52" height="52" fill="url(#vcg)" stroke="#a5a5a5" stroke-width="1"/>
<rect x="1840" y="128.5" width="33" height="32" fill="#dcdde0"/>
<text x="1857" y="149.5" font-size="11" font-weight="bold" fill="#959595" text-anchor="middle" font-family="Liberation Sans" textLength="28" lengthAdjust="spacingAndGlyphs">BACK</text>
<text x="1877.8" y="115" font-size="13" fill="#7177e6" stroke="#7177e6" stroke-width="0.3" text-anchor="middle" font-family="Liberation Sans">Z</text>
<text x="1822" y="171" font-size="11" fill="#f08a8a" text-anchor="middle" font-family="Liberation Sans">X</text>
<text x="1885" y="178.5" font-size="11" fill="#7bd47b" text-anchor="middle" font-family="Liberation Sans">Y</text>
</svg>
<div id="dlg">
<div class="abs" style="left:0;top:0;width:248px;height:24px;border-bottom:1px solid #d4d4d4;background:#f0f0f0"></div>
<div class="abs" style="left:1px;top:6px;width:1px;height:11px;background:#888"></div><div class="abs" style="left:3px;top:6px;width:1px;height:11px;background:#555"></div>
<div class="abs" style="left:12px;top:7px;width:9px;height:9px;border-radius:50%;background:#222"></div><div class="abs" style="left:14px;top:11px;width:5px;height:1.4px;background:#fff"></div>
<div class="dt" style="left:24px;top:5px;color:#444;font-size:10px">2D PROFILE : 2D PROFILE2</div>
<div class="dt" style="left:233px;top:6px;font-size:8px;color:#222;letter-spacing:-2px">&#9654;&#9654;</div>
<div class="abs" style="left:0;top:52px;width:248px;height:1px;background:#d0d0d0"></div>
<div class="abs" style="left:28px;top:31px;width:30px;height:23px;background:#f4f4f4;border:1px solid #d0d0d0;border-bottom:none"></div>
<svg class="abs" style="left:0;top:27px" width="170" height="26" viewBox="0 0 170 26">
<rect x="28.5" y="1" width="1" height="25" fill="#d0d0d0"/>
<rect x="57" y="1" width="1" height="25" fill="#d0d0d0"/>
<rect x="86.5" y="1" width="1" height="25" fill="#d0d0d0"/>
<rect x="115.5" y="1" width="1" height="25" fill="#d0d0d0"/>
<rect x="144.5" y="1" width="1" height="25" fill="#d0d0d0"/>
<path d="M10,6 L18,6 L18,10 L16,14 L16,20 L12,22 L12,14 L10,10 Z" fill="#fff" stroke="#555" stroke-width="1.1"/><path d="M12,14 L16,12 M12,17 L16,15" stroke="#555" stroke-width="0.9"/>
<path d="M37,12 L41,7 L50,7 L50,16 L46,21 L37,21 Z M37,12 L46,12 L50,7 M46,12 L46,21" fill="#fff" stroke="#333" stroke-width="1.1"/>
<path d="M37.5,12.5 L45.5,12.5 L45.5,20.5 L37.5,20.5 Z" fill="#4da3e8" opacity="0.25"/>
<path d="M66,12 L70,7 L79,7 L79,16 L75,21 L66,21 Z M66,12 L75,12 L79,7 M75,12 L75,21" fill="#fff" stroke="#333" stroke-width="1.1"/><path d="M66.5,11.5 L70.5,7.5 L78.5,7.5 L74.5,11.5 Z" fill="#f39c12"/>
<rect x="95.5" y="6.5" width="13" height="15" fill="#fff" stroke="#333" stroke-width="1.1"/><path d="M98,10 h8 M98,13 h8 M98,16 h8 M98,19 h8" stroke="#333" stroke-width="1"/>
<rect x="95.5" y="6.5" width="2" height="15" fill="#4da3e8" opacity="0.5"/>
<rect x="123" y="6" width="14" height="15" fill="#f5d33a"/><path d="M124,10 h12 v4 h-4 v3 h4 v3 h-12 v-3 h4 v-3 h-4 z" fill="#fff" stroke="#333" stroke-width="1"/>
</svg>
<div class="abs" style="left:11px;top:65px;width:0;height:0;border-left:4.5px solid transparent;border-right:4.5px solid transparent;border-top:6px solid #222"></div>
<div class="dt" style="left:25px;top:61px;font-weight:bold;color:#3a3a3a;font-size:11.5px">Geometry</div>
<div class="dt" style="left:12px;top:92px">Contour Selection</div>
<div class="abs" style="left:142px;top:85px;width:64px;height:27px;background:#0a96e2;border:1px solid #0d86c8"></div>
<svg class="abs" style="left:148px;top:91px" width="12" height="14" viewBox="0 0 12 14"><path d="M2,1 L2,12 L4.5,9.5 L6.5,13 L8,12.3 L6.2,8.8 L9.5,8.8 Z" fill="#fff" stroke="#333" stroke-width="0.8"/></svg>
<div class="dt" style="left:162px;top:92px;color:#fff">38 Ch...</div>
<svg class="abs" style="left:217px;top:94px" width="10" height="10" viewBox="0 0 10 10"><path d="M1,1 L9,9 M9,1 L1,9" stroke="#444" stroke-width="1.8"/></svg>
<div class="dt" style="left:12px;top:122px">Select same plane faces</div>
<div class="abs" style="left:148px;top:122px;width:12px;height:12px;border:1px solid #555;border-radius:3px;background:linear-gradient(#f4f4f4,#d8d8d8)"></div>
<div class="dt" style="left:12px;top:152px">Loops</div>
<div class="abs" style="left:142px;top:145px;width:93px;height:27px;background:#fff;border:1px solid #d6d6d6"></div>
<div class="dt" style="left:149px;top:152px">All loops</div><div class="dt" style="left:222px;top:154px;font-size:7px">&#9660;</div>
<div class="dt" style="left:12px;top:182px">Side</div>
<div class="abs" style="left:142px;top:175px;width:93px;height:27px;background:#fff;border:1px solid #d6d6d6"></div>
<div class="dt" style="left:149px;top:182px">Start outside</div><div class="dt" style="left:222px;top:184px;font-size:7px">&#9660;</div>
<div class="abs" style="left:2px;top:207px;width:234px;height:3px;background:#cacaca"></div>
<div class="abs" style="left:11px;top:221px;width:13px;height:13px;border:1px solid #555;border-radius:3px;background:linear-gradient(#f4f4f4,#d4d4d4)"></div>
<div class="dt" style="left:31px;top:222px;font-weight:bold;color:#333">Tabs</div>
<div class="abs" style="left:0;top:263px;width:248px;height:1px;background:#d4d4d4"></div>
<div class="abs" style="left:9px;top:276px;width:12px;height:12px;border-radius:50%;background:#111"></div>
<div class="abs" style="left:9px;top:276px;width:12px;height:12px;color:#fff;font-size:9px;font-weight:bold;text-align:center;line-height:12px;font-family:'Liberation Serif',serif">i</div>
<div class="abs" style="left:107px;top:272px;width:60px;height:20px;border:1px solid #c8c8c8;background:#e9e9e9"></div>
<div class="dt" style="left:129px;top:276px;font-size:12px;color:#555">OK</div>
<div class="abs" style="left:177px;top:272px;width:60px;height:20px;border:1px solid #c8c8c8;background:#e9e9e9"></div>
<div class="dt" style="left:187px;top:276px;font-size:12px;color:#555">Cancel</div>
</div>
</body></html>
